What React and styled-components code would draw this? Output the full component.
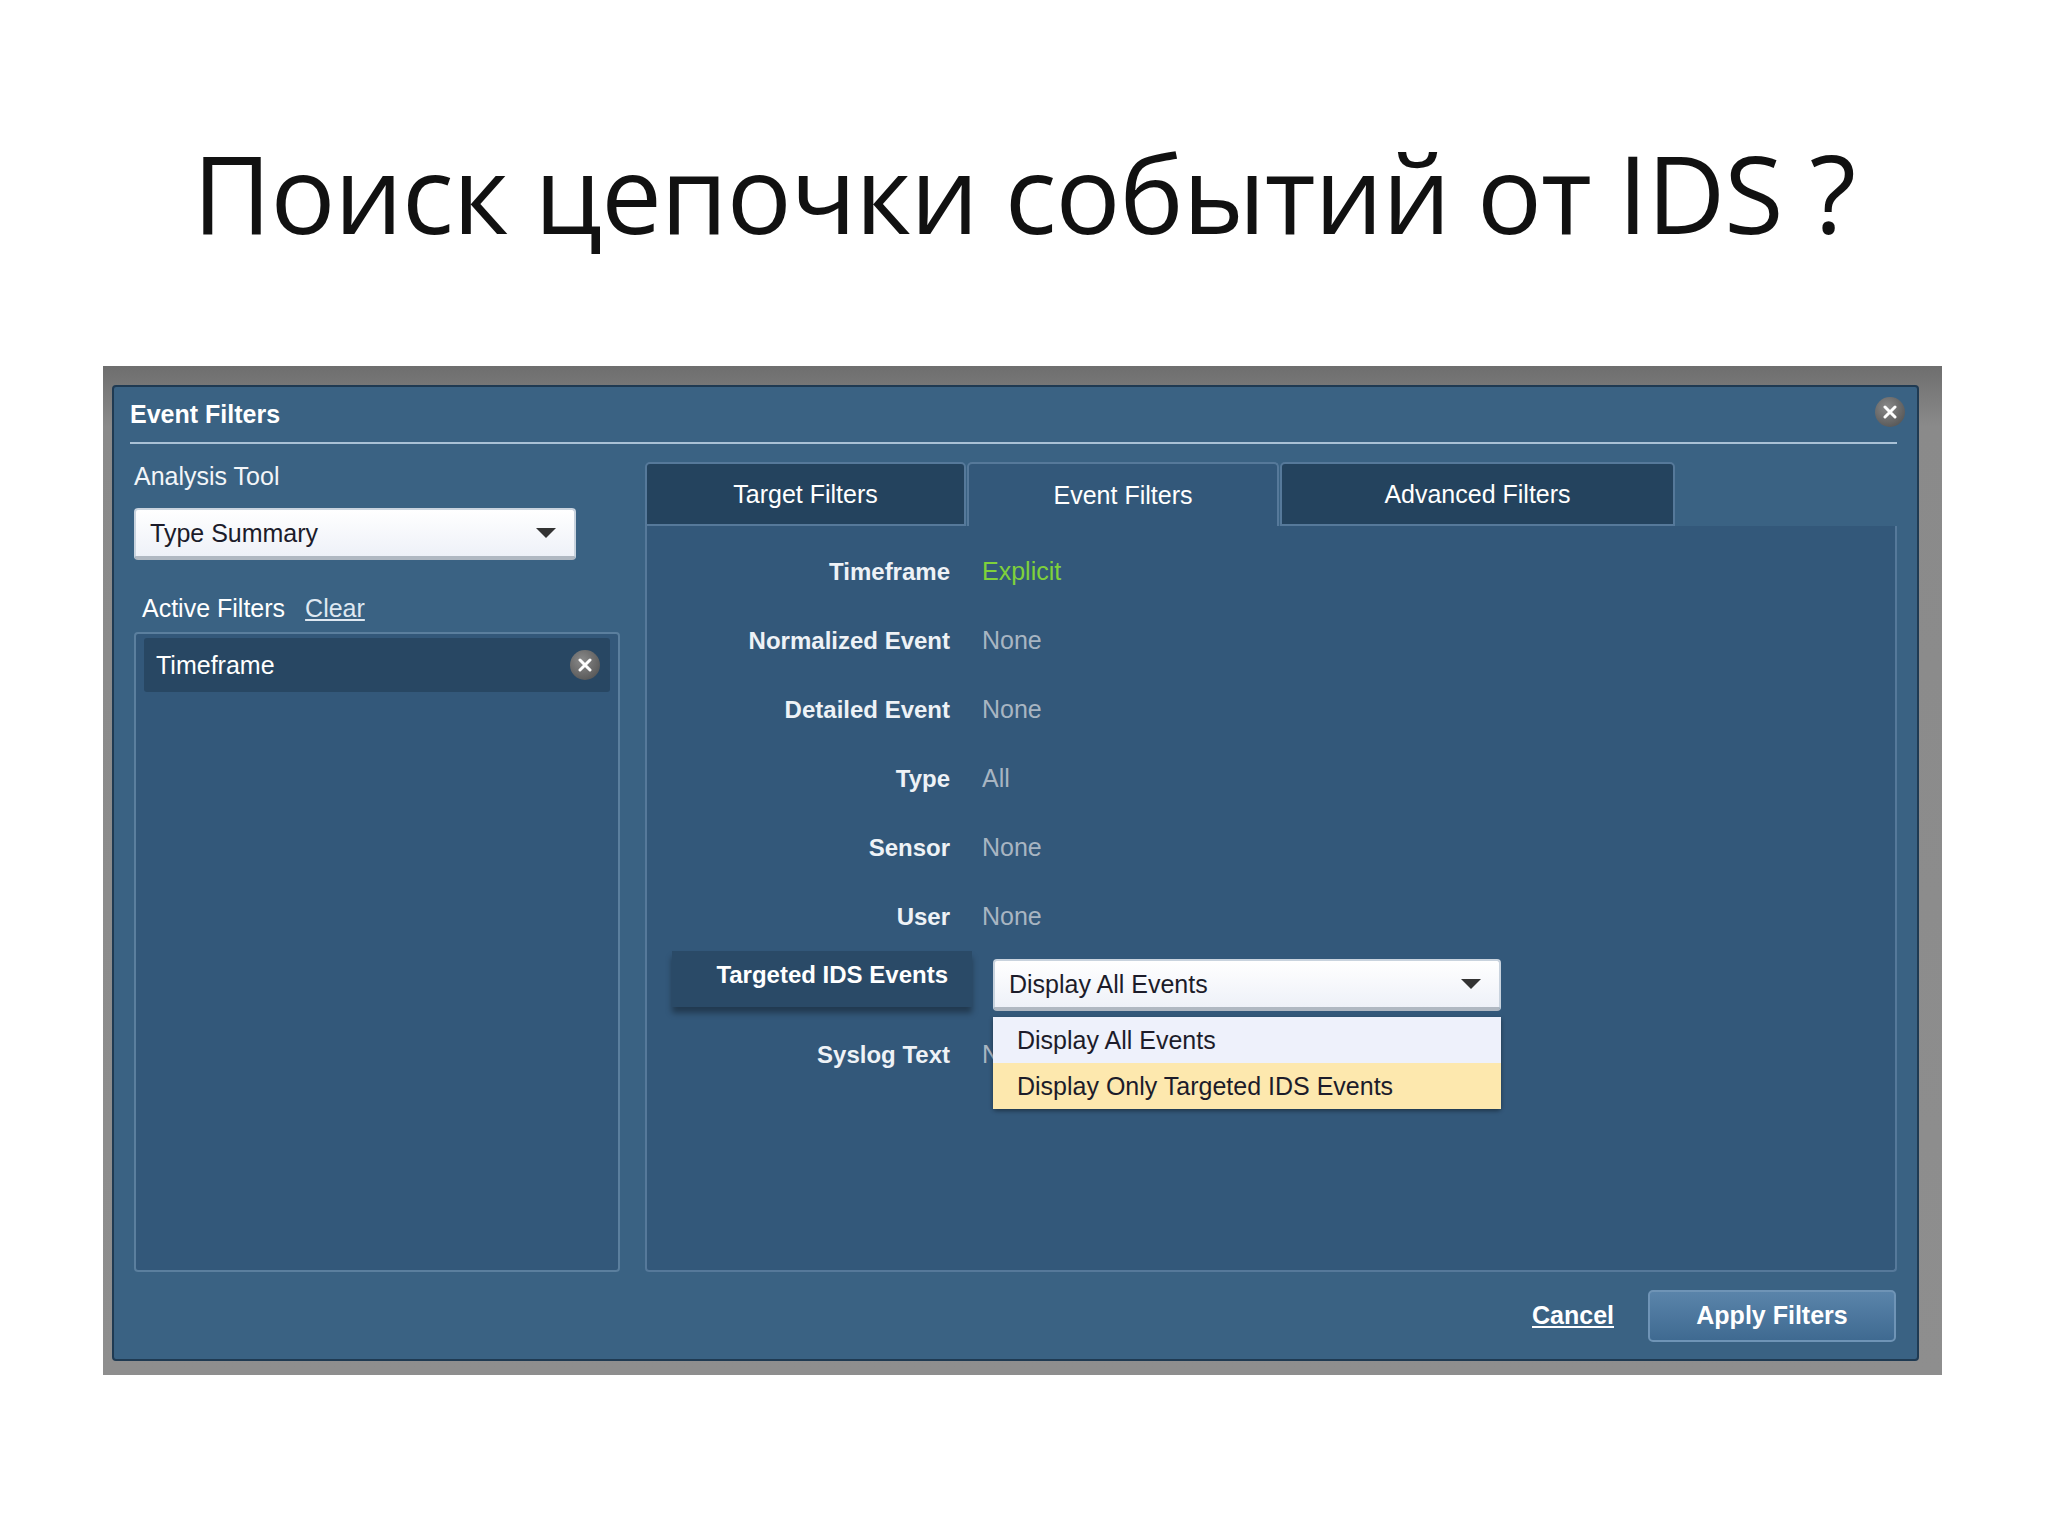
import React from 'react';
import styled, { createGlobalStyle } from 'styled-components';

const Global = createGlobalStyle`
  html, body { margin: 0; background: #fff; }
  body { width: 2048px; height: 1536px; overflow: hidden; }
`;

const Slide = styled.div`
  width: 2048px;
  height: 1536px;
  display: flex;
  flex-direction: column;
  align-items: center;
`;

const Title = styled.h1`
  margin: 118px 0 0;
  height: 150px;
  font-family: "Open Sans", "Noto Sans", sans-serif;
  font-weight: 400;
  font-size: 108px;
  line-height: 150px;
  color: #111;
  letter-spacing: -1px;
`;

const Frame = styled.div`
  margin-top: 98px;
  margin-left: -3px;
  width: 1839px;
  height: 1009px;
  box-sizing: border-box;
  padding: 19px 23px 14px 9px;
  background: linear-gradient(#6e6e6e, #8a8a8a 6%, #8e8e8e);
`;

const Dialog = styled.div`
  height: 100%;
  box-sizing: border-box;
  background: #3a6283;
  border: 2px solid #1f3a52;
  border-radius: 4px;
  padding: 0 20px;
  display: flex;
  flex-direction: column;
  font-family: "Liberation Sans", Arial, sans-serif;
  color: #fff;
  position: relative;
`;

const Header = styled.div`
  height: 55px;
  display: flex;
  align-items: center;
  font-weight: 700;
  font-size: 25px;
  border-bottom: 2px solid #a9c1d6;
  margin-left: -4px;
`;

const CloseBtn = styled.div`
  position: ${p => (p.$inline ? 'static' : 'absolute')};
  right: 12px;
  top: 10px;
  width: 30px;
  height: 30px;
  border-radius: 50%;
  background: radial-gradient(circle at 40% 35%, #8a8a8a, #4a4a4a);
  display: flex;
  align-items: center;
  justify-content: center;
`;

const Body = styled.div`
  display: flex;
  gap: 25px;
  padding-top: 18px;
  height: 810px;
`;

const Left = styled.div`
  width: 486px;
  display: flex;
  flex-direction: column;
`;

const Label = styled.div`
  font-size: 25px;
  height: 30px;
  color: #f2f5f8;
`;

const Select = styled.div`
  width: ${p => p.$w}px;
  height: 52px;
  box-sizing: border-box;
  background: linear-gradient(#ffffff, #eef1f8);
  border: 2px solid #c9d3de;
  border-bottom: 4px solid #b0b8c2;
  border-radius: 4px;
  display: flex;
  align-items: center;
  justify-content: space-between;
  padding: 0 18px 0 14px;
  color: #1c1c2a;
  font-size: 25px;
  margin-top: ${p => p.$mt || 0}px;
`;

const Caret = styled.div`
  width: 0;
  height: 0;
  border-left: 10px solid transparent;
  border-right: 10px solid transparent;
  border-top: 10px solid #333;
`;

const ActiveRow = styled.div`
  display: flex;
  gap: 20px;
  margin-top: 34px;
  padding-left: 8px;
  font-size: 25px;
  height: 30px;
`;

const ClearLink = styled.span`
  text-decoration: underline;
  color: #dfe8f1;
`;

const FilterBox = styled.div`
  margin-top: 8px;
  flex: 1;
  border: 2px solid #5b7f9e;
  border-radius: 4px;
  background: #33587a;
  padding: 4px 8px;
`;

const FilterItem = styled.div`
  height: 54px;
  background: #284763;
  border-radius: 3px;
  display: flex;
  align-items: center;
  justify-content: space-between;
  padding: 0 10px 0 12px;
  font-size: 25px;
`;

const Right = styled.div`
  flex: 1;
  display: flex;
  flex-direction: column;
`;

const Tabs = styled.div`
  display: flex;
  height: 64px;
`;

const Tab = styled.div`
  width: ${p => p.$w}px;
  box-sizing: border-box;
  display: flex;
  align-items: center;
  justify-content: center;
  font-size: 25px;
  background: ${p => (p.$active ? '#33587a' : '#24435e')};
  border: 2px solid #56799a;
  border-bottom: ${p => (p.$active ? 'none' : '2px solid #56799a')};
  border-radius: 5px 5px 0 0;
  margin-right: 1px;
`;

const Panel = styled.div`
  flex: 1;
  background: #33587a;
  border: 2px solid #56799a;
  border-top: none;
  border-radius: 0 0 4px 4px;
  padding-top: 11px;
  display: flex;
  flex-direction: column;
`;

const Row = styled.div`
  display: flex;
  align-items: center;
  height: 69px;
`;

const Key = styled.div`
  width: 335px;
  text-align: right;
  font-weight: 700;
  font-size: 24px;
  color: #eef2f6;
  padding-right: 32px;
  box-sizing: border-box;
`;

const Val = styled.div`
  font-size: 25px;
  color: ${p => p.$c || '#a8b5c2'};
`;

const HiRow = styled.div`
  display: flex;
  align-items: flex-start;
  height: 69px;
  margin-left: 25px;
`;

const HiKey = styled.div`
  width: 300px;
  padding: 10px 24px 0 0;
  height: 56px;
  box-sizing: border-box;
  text-align: right;
  font-weight: 700;
  font-size: 24px;
  background: #2a4a67;
  box-shadow: 0 6px 6px rgba(0, 0, 0, 0.35);
`;

const DropWrap = styled.div`
  margin-left: 21px;
  margin-top: 8px;
  position: relative;
`;

const Menu = styled.div`
  position: absolute;
  top: 58px;
  left: 0;
  width: 508px;
  background: #eef1fb;
  border-radius: 0 0 4px 4px;
  box-shadow: 0 2px 4px rgba(0, 0, 0, 0.4);
  z-index: 2;
`;

const Opt = styled.div`
  height: 46px;
  display: flex;
  align-items: center;
  padding-left: 24px;
  font-size: 25px;
  color: #1c1c2a;
  background: ${p => (p.$hi ? '#fde8ae' : 'transparent')};
`;

const Footer = styled.div`
  flex: 1;
  display: flex;
  justify-content: flex-end;
  align-items: center;
  gap: 34px;
  padding-right: 1px;
`;

const Cancel = styled.span`
  font-weight: 700;
  font-size: 25px;
  text-decoration: underline;
`;

const Apply = styled.div`
  width: 248px;
  height: 52px;
  box-sizing: border-box;
  border: 2px solid #6f94b6;
  border-radius: 5px;
  background: linear-gradient(#5a84aa, #3f6a91);
  display: flex;
  align-items: center;
  justify-content: center;
  font-weight: 700;
  font-size: 25px;
`;

const X = ({ size = 14 }) => (
  <svg width={size} height={size} viewBox="0 0 14 14">
    <path d="M2 2L12 12M12 2L2 12" stroke="#fff" strokeWidth="3" strokeLinecap="round" />
  </svg>
);

const rows = [
  ['Timeframe', 'Explicit', '#7fd13b'],
  ['Normalized Event', 'None'],
  ['Detailed Event', 'None'],
  ['Type', 'All'],
  ['Sensor', 'None'],
  ['User', 'None'],
];

export default function App() {
  return (
    <Slide>
      <Global />
      <Title>Поиск цепочки событий от IDS ?</Title>
      <Frame>
        <Dialog>
          <Header>Event Filters</Header>
          <CloseBtn><X /></CloseBtn>
          <Body>
            <Left>
              <Label>Analysis Tool</Label>
              <Select $w={442} $mt={16}>Type Summary<Caret /></Select>
              <ActiveRow>Active Filters <ClearLink>Clear</ClearLink></ActiveRow>
              <FilterBox>
                <FilterItem>Timeframe<CloseBtn $inline><X /></CloseBtn></FilterItem>
              </FilterBox>
            </Left>
            <Right>
              <Tabs>
                <Tab $w={321}>Target Filters</Tab>
                <Tab $w={312} $active>Event Filters</Tab>
                <Tab $w={395}>Advanced Filters</Tab>
              </Tabs>
              <Panel>
                {rows.map(([k, v, c]) => (
                  <Row key={k}><Key>{k}</Key><Val $c={c}>{v}</Val></Row>
                ))}
                <HiRow>
                  <HiKey>Targeted IDS Events</HiKey>
                  <DropWrap>
                    <Select $w={508}>Display All Events<Caret /></Select>
                    <Menu>
                      <Opt>Display All Events</Opt>
                      <Opt $hi>Display Only Targeted IDS Events</Opt>
                    </Menu>
                  </DropWrap>
                </HiRow>
                <Row><Key>Syslog Text</Key><Val>None</Val></Row>
              </Panel>
            </Right>
          </Body>
          <Footer>
            <Cancel>Cancel</Cancel>
            <Apply>Apply Filters</Apply>
          </Footer>
        </Dialog>
      </Frame>
    </Slide>
  );
}
